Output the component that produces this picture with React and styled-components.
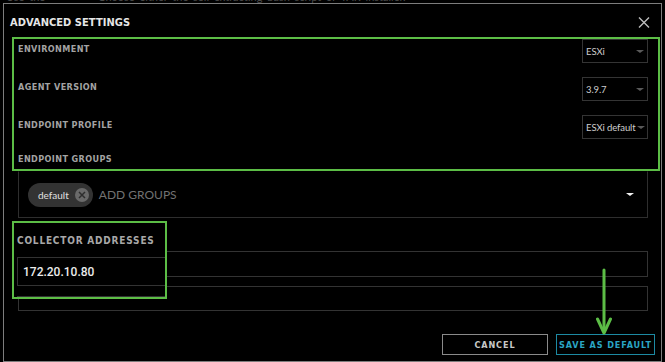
import React from "react";
import styled, { createGlobalStyle } from "styled-components";

const GlobalStyle = createGlobalStyle`
  html, body { margin: 0; padding: 0; background: #000; }
  body { overflow: hidden; }
  * { box-sizing: border-box; }
`;

const condensed = `
  font-family: "DejaVu Sans Condensed", "DejaVu Sans", sans-serif;
  font-stretch: condensed;
`;

const GREEN = "#5cbd46";

const Page = styled.div`
  width: 665px;
  height: 362px;
  background: #000;
  overflow: hidden;
`;

const BackdropStrip = styled.div`
  height: 3px;
  overflow: hidden;
  padding-left: 6px;
`;

const BackdropText = styled.div`
  margin-top: -9px;
  line-height: 12px;
  font-family: "Lato", sans-serif;
  font-size: 11px;
  color: #4a4a4a;
  white-space: nowrap;
  word-spacing: 2px;
`;

const Dialog = styled.div`
  position: relative;
  margin-left: 3px;
  width: 659px;
  height: 359px;
  border: 1px solid #7d7d7d;
  display: flex;
  flex-direction: column;
  background: #000;
`;

const Header = styled.div`
  height: 33px;
  padding: 3px 11px 0 6px;
  display: flex;
  align-items: center;
  justify-content: space-between;
`;

const Title = styled.div`
  ${condensed}
  font-size: 11px;
  font-weight: 600;
  letter-spacing: 0.05px;
  color: #e6e6e6;
`;

const CloseButton = styled.div`
  width: 12px;
  height: 11px;
  display: flex;
`;

const Body = styled.div`
  padding: 0 13px 0 14px;
  display: flex;
  flex-direction: column;
`;

const Annotation = styled.div`
  margin: 0 -12px 0 -6px;
  border: 2px solid ${GREEN};
  padding: 0 10px 4px 4px;
`;

const Row = styled.div`
  display: flex;
  justify-content: space-between;
  align-items: flex-start;
  height: ${(p) => (p.$labelOnly ? "12px" : "24px")};
  margin-bottom: ${(p) => (p.$labelOnly ? "0" : "14px")};
`;

const Label = styled.div`
  ${condensed}
  padding-top: ${(p) => (p.$labelOnly ? "0" : "4px")};
  line-height: 12px;
  font-size: 9px;
  font-weight: 700;
  letter-spacing: 0.4px;
  color: #a3a3a3;
`;

const Select = styled.div`
  width: 66px;
  height: 24px;
  border: 1px solid #343434;
  display: flex;
  align-items: center;
  justify-content: space-between;
  padding: 0 3px 0 3px;
  font-family: "Lato", sans-serif;
  font-size: 9.5px;
  letter-spacing: -0.1px;
  color: #cfcfcf;
  white-space: nowrap;
  gap: 1px;
`;

const Caret = styled.span`
  flex: none;
  width: 0;
  height: 0;
  border-left: ${(p) => p.$size || 4}px solid transparent;
  border-right: ${(p) => p.$size || 4}px solid transparent;
  border-top: ${(p) => (p.$size ? p.$size - 1 : 3)}px solid ${(p) => p.$color || "#5a5a5a"};
`;

const GroupBox = styled.div`
  height: 47px;
  border: 1px solid #2e2e2e;
  border-top-color: transparent;
  display: flex;
  align-items: center;
  padding: 0 13px 0 9px;
  gap: 6px;
`;

const Chip = styled.div`
  height: 24px;
  border-radius: 12px;
  background: #333;
  display: flex;
  align-items: center;
  padding: 0 4px 0 10px;
  gap: 6px;
  font-family: "Lato", sans-serif;
  font-size: 10px;
  color: #e0e0e0;
`;

const ChipClose = styled.span`
  width: 14px;
  height: 14px;
  border-radius: 50%;
  background: #6a6a6a;
  display: flex;
  align-items: center;
  justify-content: center;
`;

const Placeholder = styled.span`
  flex: 1;
  font-family: "Lato", sans-serif;
  font-size: 12px;
  color: #727272;
`;

const Collector = styled.div`
  position: relative;
  padding-top: 33px;
  display: flex;
  flex-direction: column;
  gap: 9px;
`;

const TextInput = styled.div`
  height: ${(p) => p.$h}px;
  border: 1px solid #333;
`;

const ZoomOverlay = styled.div`
  position: absolute;
  top: 3px;
  left: -6px;
  width: 155px;
  height: 78px;
  border: 2px solid ${GREEN};
  background: #000;
  overflow: hidden;
  padding-left: 3px;
  display: flex;
  flex-direction: column;
`;

const BigLabel = styled.div`
  ${condensed}
  margin-top: 11px;
  line-height: 14px;
  font-size: 10px;
  font-weight: 700;
  letter-spacing: 0.8px;
  color: #a8a8a8;
`;

const BigInput = styled.div`
  margin-top: 9px;
  flex: none;
  height: 29px;
  border: 1px solid #333;
  border-right: none;
  display: flex;
  align-items: center;
  padding-left: 5px;
  font-family: "Roboto", sans-serif;
  font-size: 12px;
  font-weight: 500;
  color: #ececec;
  margin-right: -2px;
`;

const BigInputNext = styled.div`
  margin-top: 10px;
  flex: none;
  height: 20px;
  border: 1px solid #333;
  border-right: none;
  margin-right: -2px;
`;

const Footer = styled.div`
  margin-top: auto;
  display: flex;
  justify-content: flex-end;
  gap: 8px;
  padding: 0 6px 6px 0;
`;

const Button = styled.div`
  ${condensed}
  height: 21px;
  min-width: ${(p) => (p.$primary ? "97px" : "106px")};
  padding: 0 2px;
  border: 1px solid ${(p) => (p.$primary ? "#1d8aa3" : "#8a8a8a")};
  color: ${(p) => (p.$primary ? "#2aa5c4" : "#c8c8c8")};
  display: flex;
  align-items: center;
  justify-content: center;
  font-size: 9px;
  font-weight: 700;
  letter-spacing: 0.9px;
  white-space: nowrap;
`;

const Arrow = styled.svg`
  position: absolute;
  left: 592px;
  top: 264px;
`;

export default function App() {
  const rows = [
    { label: "ENVIRONMENT", value: "ESXi" },
    { label: "AGENT VERSION", value: "3.9.7" },
    { label: "ENDPOINT PROFILE", value: "ESXi default" },
  ];
  return (
    <Page>
      <GlobalStyle />
      <BackdropStrip>
        <BackdropText>
          Use the&nbsp;&nbsp;&nbsp;&nbsp;&nbsp;&nbsp;&nbsp;&nbsp;&nbsp;&nbsp;&nbsp;Choose either the self-extracting bash script or TAR installer.&nbsp;&nbsp;&nbsp;&nbsp;&nbsp;&nbsp;&nbsp;&nbsp;&nbsp;&nbsp;&nbsp;&nbsp;-
        </BackdropText>
      </BackdropStrip>
      <Dialog>
        <Header>
          <Title>ADVANCED SETTINGS</Title>
          <CloseButton>
            <svg width="12" height="11" viewBox="0 0 12 11">
              <path d="M1 0.5 L11 10.5 M11 0.5 L1 10.5" stroke="#bdbdbd" strokeWidth="1.4" fill="none" />
            </svg>
          </CloseButton>
        </Header>
        <Body>
          <Annotation>
            {rows.map((r) => (
              <Row key={r.label}>
                <Label>{r.label}</Label>
                <Select>
                  <span>{r.value}</span>
                  <Caret />
                </Select>
              </Row>
            ))}
            <Row $labelOnly>
              <Label $labelOnly>ENDPOINT GROUPS</Label>
            </Row>
          </Annotation>
          <GroupBox>
            <Chip>
              default
              <ChipClose>
                <svg width="8" height="8" viewBox="0 0 8 8">
                  <path d="M1 1 L7 7 M7 1 L1 7" stroke="#2e2e2e" strokeWidth="1.5" />
                </svg>
              </ChipClose>
            </Chip>
            <Placeholder>ADD GROUPS</Placeholder>
            <Caret $size={4} $color="#f2f2f2" />
          </GroupBox>
          <Collector>
            <TextInput $h={26} />
            <TextInput $h={25} />
            <ZoomOverlay>
              <BigLabel>COLLECTOR ADDRESSES</BigLabel>
              <BigInput>172.20.10.80</BigInput>
              <BigInputNext />
            </ZoomOverlay>
          </Collector>
        </Body>
        <Footer>
          <Button>CANCEL</Button>
          <Button $primary>SAVE AS DEFAULT</Button>
        </Footer>
        <Arrow width="16" height="68" viewBox="0 0 16 68">
          <path d="M8 2 L8 63" stroke={GREEN} strokeWidth="3" strokeLinecap="round" />
          <path d="M1.5 51 L8 65 L14.5 51" stroke={GREEN} strokeWidth="3" fill="none" strokeLinecap="round" strokeLinejoin="round" />
        </Arrow>
      </Dialog>
    </Page>
  );
}
